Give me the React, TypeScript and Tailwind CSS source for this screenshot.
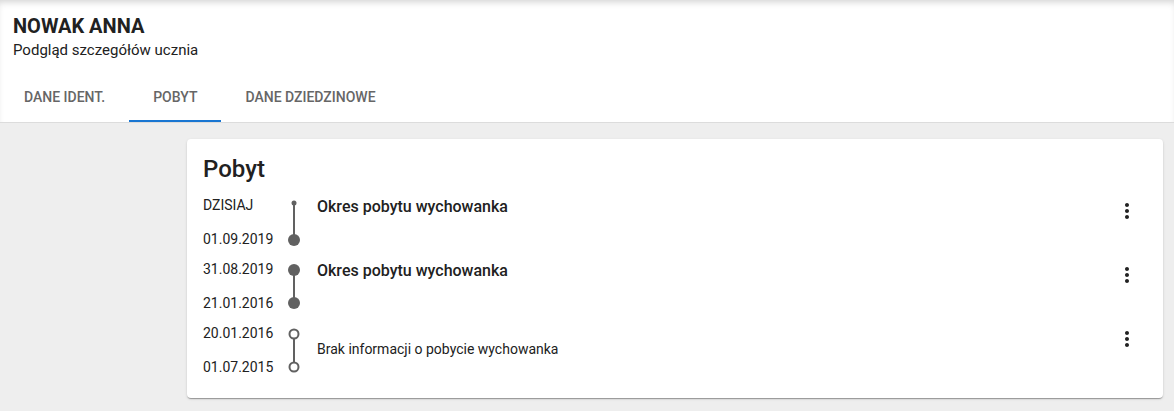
import React from "react";

type Stay = {
  from: string;
  to: string;
  title: string;
  known: boolean;
  current?: boolean;
};

const stays: Stay[] = [
  { from: "DZISIAJ", to: "01.09.2019", title: "Okres pobytu wychowanka", known: true, current: true },
  { from: "31.08.2019", to: "21.01.2016", title: "Okres pobytu wychowanka", known: true },
  { from: "20.01.2016", to: "01.07.2015", title: "Brak informacji o pobycie wychowanka", known: false },
];

const tabs = ["DANE IDENT.", "POBYT", "DANE DZIEDZINOWE"];

const MoreVert = () => (
  <svg width="24" height="24" viewBox="0 0 24 24" className="fill-[#222]">
    <path d="M12 8c1.1 0 2-.9 2-2s-.9-2-2-2-2 .9-2 2 .9 2 2 2zm0 2c-1.1 0-2 .9-2 2s.9 2 2 2 2-.9 2-2-.9-2-2-2zm0 6c-1.1 0-2 .9-2 2s.9 2 2 2 2-.9 2-2-.9-2-2-2z" />
  </svg>
);

const Marker = ({ stay }: { stay: Stay }) => {
  if (!stay.known) {
    return (
      <svg width="16" height="54" viewBox="0 0 16 54">
        <line x1="8" y1="16" x2="8" y2="39" stroke="#616161" strokeWidth="2" />
        <circle cx="8" cy="11" r="4.5" fill="#fff" stroke="#616161" strokeWidth="2" />
        <circle cx="8" cy="44" r="4.5" fill="#fff" stroke="#616161" strokeWidth="2" />
      </svg>
    );
  }
  const top = stay.current ? 8 : 11;
  return (
    <svg width="16" height="54" viewBox="0 0 16 54">
      <line x1="8" y1={top} x2="8" y2={stay.current ? 45 : 44} stroke="#616161" strokeWidth="2" />
      <circle cx="8" cy={top} r={stay.current ? 2.5 : 6} fill="#616161" />
      <circle cx="8" cy={stay.current ? 45 : 44} r="6" fill="#616161" />
    </svg>
  );
};

export default function App() {
  return (
    <div className="min-h-screen bg-[#eeeeee] font-['Roboto',sans-serif] text-[#212121]">
      <header className="bg-white border-b border-[#dcdcdc] shadow-[inset_0_5px_7px_-3px_rgba(0,0,0,0.18)]">
        <div className="px-[13px] pt-[13px]">
          <h1 className="text-[20px] leading-[27px] font-bold">NOWAK ANNA</h1>
          <p className="text-[15px] leading-5">Podgląd szczegółów ucznia</p>
        </div>
        <nav className="flex mt-[14px]">
          {tabs.map((t) => (
            <button
              key={t}
              className={
                "h-12 px-6 text-sm font-medium text-[#666] border-b-2 " +
                (t === "POBYT" ? "border-[#1976d2]" : "border-transparent")
              }
            >
              {t}
            </button>
          ))}
        </nav>
      </header>

      <main className="pl-[187px] pr-[11px] pt-4 pb-[13px]">
        <section className="bg-white rounded pl-4 pr-4 pt-[14px] pb-[21px] shadow-[0_2px_1px_-1px_rgba(0,0,0,0.2),0_1px_1px_0_rgba(0,0,0,0.14),0_1px_3px_0_rgba(0,0,0,0.12)]">
          <h2 className="text-2xl leading-8 font-medium">Pobyt</h2>
          <div className="mt-[10px] flex flex-col gap-[10px]">
            {stays.map((s, i) => (
              <div key={i} className="flex h-[54px]">
                <div className="w-[83px] flex flex-col justify-between text-sm leading-5">
                  <span>{s.from}</span>
                  <span>{s.to}</span>
                </div>
                <Marker stay={s} />
                <div className="flex-1 pl-[15px]">
                  {s.known ? (
                    <p className="text-base leading-6 font-medium">{s.title}</p>
                  ) : (
                    <p className="pt-[16px] text-sm leading-5">{s.title}</p>
                  )}
                </div>
                <div className="pt-1 mr-2">
                  <MoreVert />
                </div>
              </div>
            ))}
          </div>
        </section>
      </main>
    </div>
  );
}
